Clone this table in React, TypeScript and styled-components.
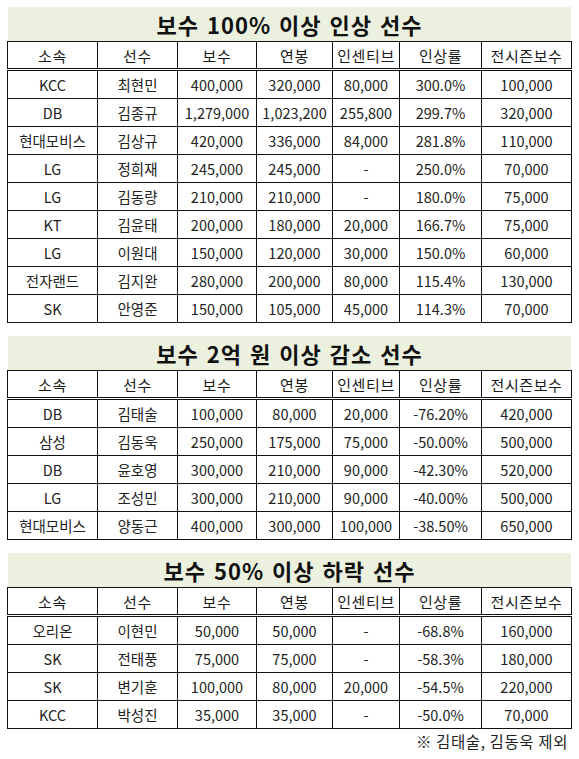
import styled, { createGlobalStyle } from 'styled-components';

type Row = [string, string, string, string, string, string, string];

const headers = ['소속', '선수', '보수', '연봉', '인센티브', '인상률', '전시즌보수'];
const colWidths = [90, 80, 79, 76, 67, 82, 90];

const tables: { title: string; rows: Row[] }[] = [
  {
    title: '보수 100% 이상 인상 선수',
    rows: [
      ['KCC', '최현민', '400,000', '320,000', '80,000', '300.0%', '100,000'],
      ['DB', '김종규', '1,279,000', '1,023,200', '255,800', '299.7%', '320,000'],
      ['현대모비스', '김상규', '420,000', '336,000', '84,000', '281.8%', '110,000'],
      ['LG', '정희재', '245,000', '245,000', '-', '250.0%', '70,000'],
      ['LG', '김동량', '210,000', '210,000', '-', '180.0%', '75,000'],
      ['KT', '김윤태', '200,000', '180,000', '20,000', '166.7%', '75,000'],
      ['LG', '이원대', '150,000', '120,000', '30,000', '150.0%', '60,000'],
      ['전자랜드', '김지완', '280,000', '200,000', '80,000', '115.4%', '130,000'],
      ['SK', '안영준', '150,000', '105,000', '45,000', '114.3%', '70,000'],
    ],
  },
  {
    title: '보수 2억 원 이상 감소 선수',
    rows: [
      ['DB', '김태술', '100,000', '80,000', '20,000', '-76.20%', '420,000'],
      ['삼성', '김동욱', '250,000', '175,000', '75,000', '-50.00%', '500,000'],
      ['DB', '윤호영', '300,000', '210,000', '90,000', '-42.30%', '520,000'],
      ['LG', '조성민', '300,000', '210,000', '90,000', '-40.00%', '500,000'],
      ['현대모비스', '양동근', '400,000', '300,000', '100,000', '-38.50%', '650,000'],
    ],
  },
  {
    title: '보수 50% 이상 하락 선수',
    rows: [
      ['오리온', '이현민', '50,000', '50,000', '-', '-68.8%', '160,000'],
      ['SK', '전태풍', '75,000', '75,000', '-', '-58.3%', '180,000'],
      ['SK', '변기훈', '100,000', '80,000', '20,000', '-54.5%', '220,000'],
      ['KCC', '박성진', '35,000', '35,000', '-', '-50.0%', '70,000'],
    ],
  },
];

const GlobalStyle = createGlobalStyle`
  body {
    margin: 0;
    background: #ffffff;
    font-family: "Noto Sans CJK KR", "Noto Sans", sans-serif;
    color: #1a1a1a;
  }
`;

const Page = styled.div`
  width: 579px;
  padding: 7px 0 0 7px;
  box-sizing: border-box;
`;

const Section = styled.section<{ $last?: boolean }>`
  width: 564px;
  margin-bottom: ${(p) => (p.$last ? '0' : '13px')};
`;

const TitleBand = styled.div`
  margin-left: 1px;
  height: 34px;
  background: #ebf1de;
  display: flex;
  align-items: center;
  justify-content: center;
  font-size: 22px;
  font-weight: 700;
  letter-spacing: 1px;
  word-spacing: 2px;
  color: #111;
`;

const Table = styled.table`
  border-collapse: collapse;
  table-layout: fixed;
  width: 564px;
  font-size: 14.5px;
`;

const HeadCell = styled.th`
  height: 26px;
  padding: 0;
  border: 1px solid #111;
  border-bottom: 3px double #111;
  font-size: 15px;
  font-weight: 400;
  letter-spacing: 0.6px;
  text-align: center;
  color: #1a1a1a;
`;

const Cell = styled.td`
  height: 27px;
  padding: 0;
  border: 1px solid #111;
  text-align: center;
  white-space: nowrap;
  color: #222;
`;

const Note = styled.div`
  width: 561px;
  text-align: right;
  font-size: 15.5px;
  letter-spacing: 0.6px;
  color: #222;
  margin-top: 1px;
`;

export default function App() {
  return (
    <Page>
      <GlobalStyle />
      {tables.map((t, i) => (
        <Section key={t.title} $last={i === tables.length - 1}>
          <TitleBand>{t.title}</TitleBand>
          <Table>
            <colgroup>
              {colWidths.map((w, k) => (
                <col key={k} style={{ width: w }} />
              ))}
            </colgroup>
            <thead>
              <tr>
                {headers.map((h) => (
                  <HeadCell key={h}>{h}</HeadCell>
                ))}
              </tr>
            </thead>
            <tbody>
              {t.rows.map((r) => (
                <tr key={r[1]}>
                  {r.map((c, k) => (
                    <Cell key={k}>{c}</Cell>
                  ))}
                </tr>
              ))}
            </tbody>
          </Table>
        </Section>
      ))}
      <Note>※ 김태술, 김동욱 제외</Note>
    </Page>
  );
}
